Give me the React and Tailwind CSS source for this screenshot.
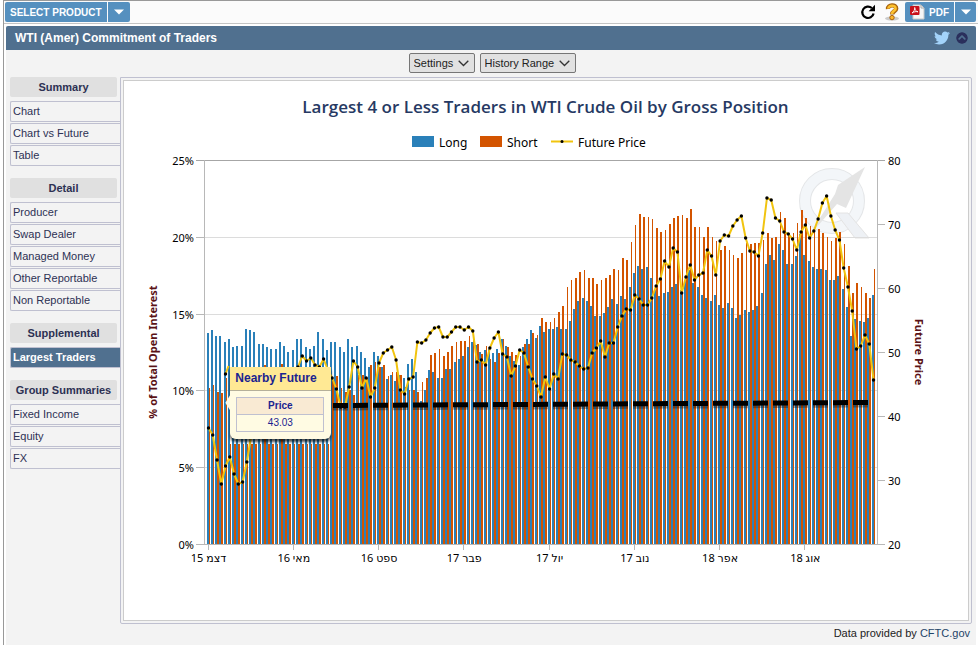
import React, { useState } from 'react'
import { FaTwitter, FaChevronCircleUp } from 'react-icons/fa'

const groups = [
  { title: 'Summary', items: ['Chart', 'Chart vs Future', 'Table'] },
  { title: 'Detail', items: ['Producer', 'Swap Dealer', 'Managed Money', 'Other Reportable', 'Non Reportable'] },
  { title: 'Supplemental', items: ['Largest Traders'] },
  { title: 'Group Summaries', items: ['Fixed Income', 'Equity', 'FX'] },
]

// weekly series, stored as y positions on the chart canvas
const long = [
  333, 330, 336, 336, 342, 339, 347, 346, 346, 329, 330, 332, 344, 344, 347, 349, 349, 342, 346, 352,
  350, 339, 339, 347, 349, 346, 332, 339, 350, 342, 342, 347, 352, 339, 347, 346, 352, 358, 367, 352,
  356, 367, 379, 375, 381, 375, 378, 364, 359, 372, 401, 390, 370, 372, 378, 378, 369, 369, 362, 359,
  356, 347, 342, 345, 352, 350, 349, 353, 349, 339, 346, 356, 361, 365, 347, 339, 330, 338, 326, 332,
  329, 329, 327, 329, 329, 321, 309, 301, 298, 301, 306, 316, 316, 313, 307, 299, 304, 296, 299, 287,
  273, 266, 269, 267, 278, 290, 296, 293, 292, 287, 284, 290, 280, 270, 283, 287, 295, 298, 301, 295,
  305, 308, 303, 308, 318, 315, 310, 312, 310, 306, 293, 264, 255, 260, 244, 250, 264, 264, 256, 234,
  255, 261, 267, 269, 269, 270, 280, 280, 276, 289, 307, 336, 319, 321, 322, 318, 295,
]
const short = [
  388, 385, 392, 393, 378, 444, 444, 444, 444, 444, 444, 444, 444, 365, 444, 444, 444, 364, 444, 444,
  444, 444, 444, 444, 444, 444, 444, 444, 444, 380, 376, 388, 392, 390, 395, 375, 375, 378, 365, 362,
  367, 365, 376, 372, 372, 375, 387, 390, 390, 392, 382, 378, 355, 353, 349, 356, 352, 346, 342, 341,
  341, 336, 339, 344, 354, 346, 359, 362, 353, 339, 347, 352, 355, 356, 344, 344, 333, 335, 318, 322,
  322, 318, 312, 306, 287, 280, 278, 272, 270, 278, 278, 284, 280, 278, 275, 269, 270, 258, 260, 242,
  225, 214, 217, 217, 219, 228, 232, 230, 224, 218, 216, 215, 218, 209, 227, 227, 237, 227, 237, 241,
  250, 246, 250, 255, 258, 253, 243, 244, 243, 243, 240, 233, 238, 237, 212, 218, 233, 233, 223, 210,
  218, 226, 230, 229, 233, 237, 241, 238, 232, 244, 266, 293, 283, 287, 293, 298, 269,
]
const price = [
  428, 435, 460, 484, 466, 457, 474, 484, 482, 462, 436, 420, 412, 405, 400, 396, 392, 388, 384, 380,
  374, 367, 356, 361, 358, 365, 367, 359, 370, 378, 389, 407, 407, 387, 361, 367, 388, 378, 397, 388,
  363, 353, 350, 347, 360, 390, 394, 379, 377, 342, 343, 340, 333, 328, 327, 337, 337, 332, 327, 327,
  330, 327, 331, 362, 360, 365, 348, 338, 332, 354, 357, 376, 366, 350, 353, 367, 379, 386, 397, 377,
  389, 374, 379, 354, 355, 360, 362, 366, 369, 368, 353, 348, 341, 357, 343, 343, 327, 316, 309, 310,
  295, 299, 305, 305, 298, 286, 279, 261, 267, 248, 252, 293, 277, 265, 280, 275, 273, 250, 256, 275,
  241, 235, 236, 226, 220, 216, 238, 251, 252, 256, 233, 198, 200, 218, 221, 232, 234, 239, 250, 232,
  225, 238, 231, 219, 203, 196, 216, 230, 240, 268, 287, 311, 349, 346, 335, 344, 380,
]

const BASE = 545
const xAt = i => 208.5 + i * 4.263

const months = ['15 דצמ', '16 מאי', '16 ספט', '17 פבר', '17 יול', '17 נוב', '18 אפר', '18 אוג']

function Caret() {
  return (
    <svg width="10" height="6" viewBox="0 0 10 6" aria-hidden="true">
      <path d="M0 .5h10L5 5.5z" fill="#fff" />
    </svg>
  )
}

function RefreshIcon() {
  return (
    <svg width="16" height="16" viewBox="0 0 16 16" aria-hidden="true">
      <path d="M11.800 4A5.700 5.700 0 1 0 13.600 9.500" fill="none" stroke="#000" strokeWidth="2.200" />
      <path d="M15 .8v6.400H8.600z" fill="#000" />
    </svg>
  )
}

function HelpIcon() {
  return (
    <svg width="16" height="18" viewBox="0 0 16 18" aria-hidden="true">
      <ellipse cx="8" cy="15.5" rx="7" ry="2" fill="#ccc" />
      <path d="M4 6C3.4 1.5 12.4 1 12.2 5.6 12 8.4 8.2 8 8.2 11.4" fill="none" stroke="#a9640f" strokeWidth="4.4" />
      <path d="M4.4 5.6C4.2 2 11.8 1.6 11.6 5.6 11.4 8 7.9 7.8 8 11" fill="none" stroke="#fcc02e" strokeWidth="2.6" />
      <circle cx="8" cy="14.6" r="2.2" fill="#fcb52a" stroke="#a9640f" />
    </svg>
  )
}

function PdfIcon() {
  return (
    <svg width="15" height="16" viewBox="0 0 15 16" aria-hidden="true">
      <path d="M3 1h8l3 3v11H3z" fill="#f6f6f6" stroke="#c9c9c9" />
      <path d="M11 1v3h3" fill="none" stroke="#aaa" />
      <rect x="0" y="2" width="9.5" height="9" rx="1" fill="#c8101a" />
      <path d="M2 9c2-1 3-4 2.700-5.500C5 6 6 7.500 8 7.800 6 7.300 4 7.800 2 9z" fill="none" stroke="#fff" strokeWidth=".9" />
    </svg>
  )
}

function Picker({ id, label, options, width }) {
  return (
    <div className={`relative ${width}`}>
      <select
        id={id}
        aria-label={label}
        className="block h-5 w-full appearance-none rounded-xs border border-[#767676] bg-[#e1e1e1] pl-1 text-[11px] leading-[18px] text-[#222]"
      >
        <option>{label}</option>
        {options.map(o => <option key={o}>{o}</option>)}
      </select>
      <svg className="pointer-events-none absolute top-[7px] right-1.5" width="11" height="7" viewBox="0 0 11 7" aria-hidden="true">
        <path d="M.7.7l4.800 4.800L10.300.7" fill="none" stroke="#333" strokeWidth="1.300" />
      </svg>
    </div>
  )
}

function Sidebar() {
  const [active, setActive] = useState('Largest Traders')

  return (
    <nav className="w-[110px] shrink-0 text-[11px]">
      {groups.map(g => (
        <section key={g.title} className="mb-3">
          <h2 className="mr-[3px] mb-1 h-5 rounded-xs bg-[#e0e0e0] text-center leading-5 font-bold text-[#2d3153]">{g.title}</h2>
          <ul className="flex flex-col gap-px">
            {g.items.map(item => (
              <li key={item}>
                <button
                  type="button"
                  onClick={() => setActive(item)}
                  className={
                    item === active
                      ? 'block h-[21px] w-full rounded-l-xs border border-r-0 border-[#bfc0d0] bg-[#50708f] pl-0.5 text-left font-bold text-white'
                      : 'block h-[21px] w-full rounded-l-xs border border-r-0 border-[#bfc0d0] pl-0.5 text-left text-[#2d3153]'
                  }
                >
                  {item}
                </button>
              </li>
            ))}
          </ul>
        </section>
      ))}
    </nav>
  )
}

function Watermark() {
  return (
    <g>
      <circle cx="832" cy="201" r="27" fill="none" stroke="#e4e6e8" strokeWidth="12" />
      <circle cx="832" cy="201" r="27" fill="none" stroke="#f3f6f9" strokeWidth="10" />
      <path d="M836 213h12l21 25h-14z" fill="#eef1f5" stroke="#e4e4e4" />
      <path d="M865 167l-27 18-3 9-27 43 29-33 9 4z" fill="#e4e4e4" />
    </g>
  )
}

function TradersChart() {
  const points = price.map((y, i) => ({ x: xAt(i), y, i }))

  return (
    <svg viewBox="124 81 844 539" className="block w-full" role="img" aria-label="Largest 4 or Less Traders in WTI Crude Oil by Gross Position">
      <text x="545.5" y="113" textAnchor="middle" className="fill-[#263963] font-['Open_Sans',sans-serif] text-[17px] font-semibold">
        Largest 4 or Less Traders in WTI Crude Oil by Gross Position
      </text>

      <g className="fill-black font-['Noto_Sans',sans-serif] text-[12px]">
        <rect x="412" y="136" width="22" height="11" fill="#2a80b9" />
        <text x="439" y="147">Long</text>
        <rect x="480" y="136" width="22" height="11" fill="#d35400" />
        <text x="507" y="147">Short</text>
        <path d="M551 141.500h22" stroke="#f1c40f" strokeWidth="2" />
        <circle cx="562" cy="141.500" r="1.500" />
        <text x="578" y="147">Future Price</text>
      </g>

      <Watermark />

      <g shapeRendering="crispEdges" fill="none">
        <path d="M204 237.500H877M204 314.500H877M204 390.500H877M204 467.500H877" stroke="#dcdcdc" />
        <path d="M196 160.500H885" stroke="#a6a6a6" />
        <path d="M196 237.500h8M196 314.500h8M196 390.500h8M196 467.500h8M877 224.500h8M877 288.500h8M877 352.500h8M877 416.500h8M877 480.500h8" stroke="#b8b8b8" />
      </g>

      <g shapeRendering="crispEdges">
        {long.map((y, i) => <rect key={i} x={xAt(i) - 2} y={y} width="2" height={BASE - y} fill="#2a80b9" />)}
        {short.map((y, i) => <rect key={i} x={xAt(i)} y={y} width="1.600" height={BASE - y} fill="#d35400" />)}
      </g>

      <g shapeRendering="crispEdges" fill="none" stroke="#b8b8b8">
        <path d="M204.500 160V545M877.500 160V545M196 544.500H885" />
        {months.map((m, i) => <path key={m} d={`M${Math.round(xAt(i * 20)) - 0.5} 545v5`} />)}
      </g>

      <polyline points={points.map(p => `${p.x},${p.y}`).join(' ')} fill="none" stroke="#f1c40f" strokeWidth="2" strokeLinejoin="round" />
      <path d="M225.500 374l3-8" stroke="#f1c40f" strokeWidth="2" />
      <circle cx="225.500" cy="374" r="1.700" />
      {points.map(p => <circle key={p.i} cx={p.x} cy={p.y} r="1.700" />)}

      {/* drawn trend line */}
      <path d="M333 407.500L868 404.500" stroke="#000" strokeOpacity=".35" strokeWidth="6" strokeDasharray="15 5" />
      <path d="M333 405.500L868 402.500" stroke="#000" strokeWidth="5" strokeDasharray="15 5" />

      <g className="fill-black font-['Noto_Sans','DejaVu_Sans',sans-serif] text-[11px]">
        {[25, 20, 15, 10, 5, 0].map((v, i) => (
          <text key={v} x="194" y={165 + Math.round(i * 76.8)} textAnchor="end">{v}%</text>
        ))}
        {[80, 70, 60, 50, 40, 30, 20].map((v, i) => (
          <text key={v} x="888" y={165 + i * 64}>{v}</text>
        ))}
        {months.map((m, i) => (
          <text key={m} x={xAt(i * 20)} y="562" textAnchor="middle" direction="ltr">{m}</text>
        ))}
      </g>

      <g className="fill-[#5a1216] font-['Noto_Sans',sans-serif] text-[11px] font-bold">
        <text transform="translate(157 352) rotate(-90)" textAnchor="middle">% of Total Open Interest</text>
        <text transform="translate(915 352) rotate(90)" textAnchor="middle">Future Price</text>
      </g>
    </svg>
  )
}

function PriceTip() {
  return (
    <div className="absolute top-[53%] left-[12.6%] w-[101px] rounded-b-md bg-[#fffbe3] pb-[7px] text-[#1a2390] shadow-[0_3px_3px_rgba(0,0,0,0.7)]">
      <div className="absolute top-7 -left-[5px] h-4 w-[5px] bg-[#fffbe3] [clip-path:polygon(100%_0,0_50%,100%_100%)]" />
      <div className="h-6 border-b border-[#b5b09a] bg-[#ffe994] pl-[5px] text-xs leading-[22px] font-bold whitespace-nowrap">Nearby Future</div>
      <table className="mx-1.5 mt-1.5 w-[88px] border-collapse text-center text-[10px]">
        <thead>
          <tr><th className="h-[17px] border border-[#bfc0d0] bg-[#f9ead3] p-0 leading-4">Price</th></tr>
        </thead>
        <tbody>
          <tr><td className="h-[17px] border border-[#bfc0d0] p-0 leading-4">43.03</td></tr>
        </tbody>
      </table>
    </div>
  )
}

export default function App() {
  return (
    <div className="min-h-screen bg-white pl-[3px] font-['Liberation_Sans',Arial,sans-serif]">
      <div className="min-h-screen border-t border-l border-[#999]">
        <header className="flex h-[23px] items-center justify-between border-b border-[#c4c4c4] bg-[#fbfbfb] pr-0.5 pl-px text-[10px] font-bold text-white">
          <div className="flex h-5 gap-px">
            <button type="button" className="rounded-l-xs bg-[#5590bf] px-[5px]">SELECT PRODUCT</button>
            <button type="button" aria-label="More products" className="flex w-[22px] items-center justify-center rounded-r-xs bg-[#5590bf]"><Caret /></button>
          </div>
          <div className="flex h-5 items-center">
            <button type="button" aria-label="Refresh" className="mr-2"><RefreshIcon /></button>
            <button type="button" aria-label="Help" className="mr-[5px]"><HelpIcon /></button>
            <button type="button" className="flex h-5 w-[49px] items-center justify-center gap-1 rounded-l-xs bg-[#5590bf]"><PdfIcon />PDF</button>
            <button type="button" aria-label="More formats" className="ml-px flex h-5 w-[21px] items-center justify-center rounded-r-xs bg-[#5590bf]"><Caret /></button>
          </div>
        </header>

        <main className="mx-0.5 mt-0.5 min-h-[calc(100vh-26px)] bg-[#f3f3f3] pb-1">
          <div className="flex h-6 items-center justify-between rounded-t-xs bg-[#50708f] pr-2 pl-[9px] text-white">
            <h1 className="text-xs font-bold">WTI (Amer) Commitment of Traders</h1>
            <div className="flex items-center gap-1.5">
              <a href="#tweet" aria-label="Share on Twitter" className="text-[#a3d3fa]"><FaTwitter size={16} /></a>
              <button type="button" aria-label="Collapse" className="text-[#2a2f5c]"><FaChevronCircleUp size={12} className="rounded-full bg-[#50708f]" /></button>
            </div>
          </div>

          <div className="flex justify-center gap-[5px] pt-[3px] pb-1 pl-0.5">
            <Picker id="settings" label="Settings" options={['Chart', 'Colors']} width="w-[66px]" />
            <Picker id="range" label="History Range" options={['1 Year', '3 Years']} width="w-[96px]" />
          </div>

          <div className="flex pr-1 pl-1">
            <Sidebar />
            <div className="min-w-0 flex-1 rounded-xs rounded-tl-none border border-[#bfc0d0] p-0.5">
              <div className="relative border border-[#ccc] bg-white">
                <TradersChart />
                <PriceTip />
              </div>
            </div>
          </div>

          <footer className="pt-px pr-1.5 text-right text-[11px] leading-4 text-[#222]">
            Data provided by <a href="#cftc" className="text-[#1f4468]">CFTC.gov</a>
          </footer>
        </main>
      </div>
    </div>
  )
}
